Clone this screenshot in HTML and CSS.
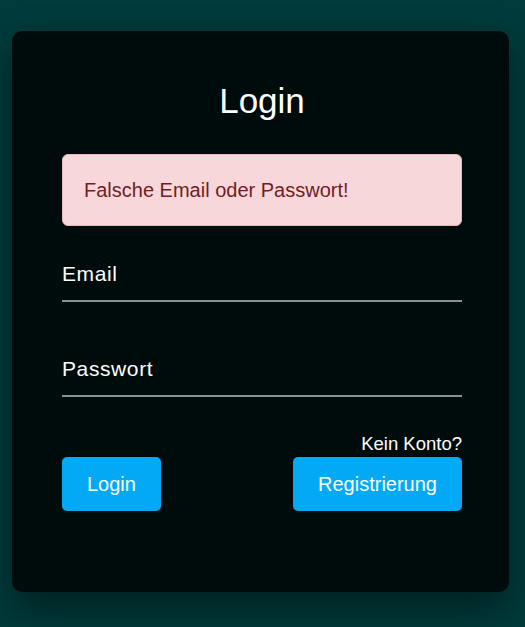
FILE: index.html
```html
<!DOCTYPE html>
<html lang="de">
<head>
<meta charset="utf-8">
<title>Login</title>
<link rel="stylesheet" href="styles.css">
</head>
<body>
<main class="card">
  <h1 class="title">Login</h1>
  <div class="alert">Falsche Email oder Passwort!</div>
  <form class="form">
    <input class="field" type="email" placeholder="Email">
    <input class="field field-pw" type="password" placeholder="Passwort">
    <div class="hint">Kein Konto?</div>
    <div class="actions">
      <button type="button" class="btn">Login</button>
      <button type="button" class="btn">Registrierung</button>
    </div>
  </form>
</main>
</body>
</html>
```
FILE: styles.css
```css
html, body {
  margin: 0;
  height: 100%;
}
body {
  background: #013b3b;
  font-family: "Liberation Sans", Arial, sans-serif;
  padding: 31px 16px 0 12px;
  box-sizing: border-box;
  overflow: hidden;
}
.card {
  background: #000b0c;
  border-radius: 10px;
  height: 561px;
  box-sizing: border-box;
  padding: 0 47px 0 50px;
  box-shadow: 0 18px 40px rgba(0, 0, 0, 0.45);
}
.title {
  margin: 0;
  padding-top: 50px;
  text-align: center;
  font-size: 35px;
  font-weight: normal;
  line-height: 40px;
  color: #ffffff;
}
.alert {
  margin-top: 33px;
  background: #f8d7da;
  border: 1px solid #e9b9be;
  border-radius: 6px;
  color: #721c24;
  font-size: 20px;
  line-height: 24px;
  padding: 23px 21px;
}
.form {
  display: flex;
  flex-direction: column;
}
.field {
  display: block;
  width: 100%;
  box-sizing: border-box;
  margin: 21px 0 0;
  padding: 14px 0;
  border: 0;
  border-bottom: 2px solid #8a9191;
  background: transparent;
  color: #fff;
  font-family: inherit;
  font-size: 21px;
  letter-spacing: 0.6px;
  line-height: 25px;
  outline: none;
}
.field::placeholder {
  color: #ffffff;
  opacity: 1;
}
.field-pw {
  margin-top: 40px;
}
.hint {
  margin-top: 36px;
  text-align: right;
  color: #fff;
  font-size: 18.5px;
  line-height: 21px;
}
.actions {
  margin-top: 3px;
  display: flex;
  justify-content: space-between;
}
.btn {
  background: #03a9f4;
  color: #fff;
  border: 0;
  border-radius: 5px;
  font-family: inherit;
  font-size: 20px;
  line-height: 24px;
  padding: 15px 25px;
}
```
